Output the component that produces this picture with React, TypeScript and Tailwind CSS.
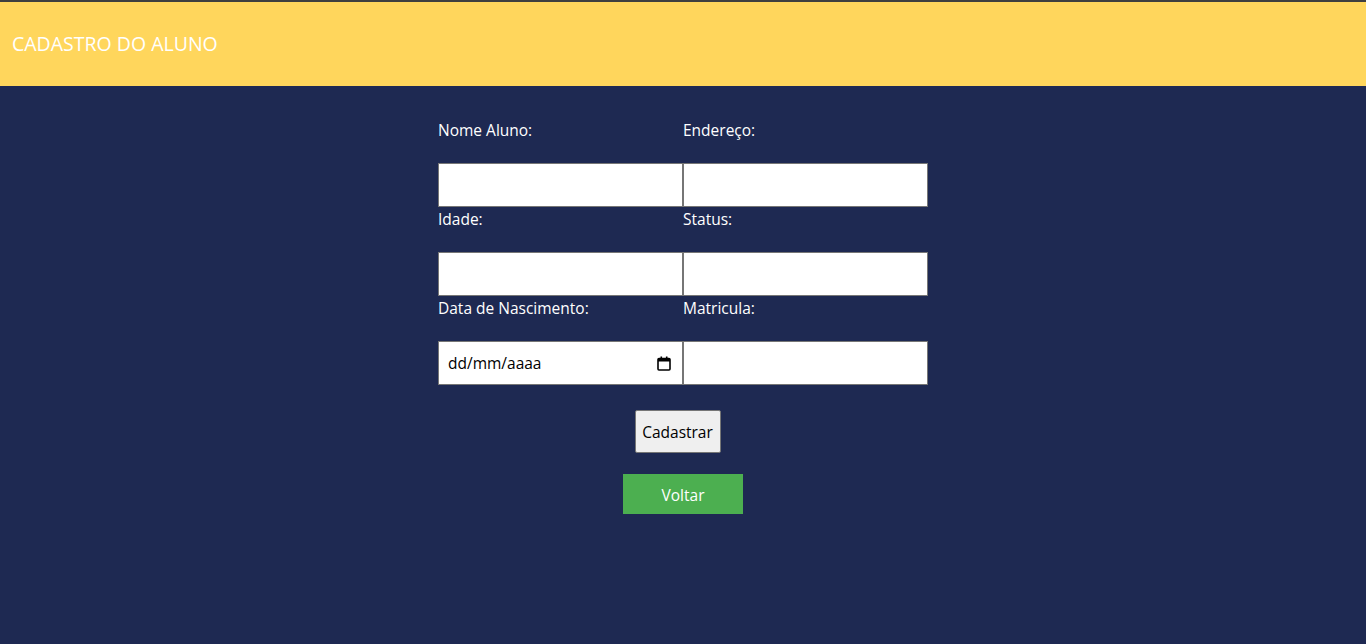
import React from "react";

const font = { fontFamily: '"Open Sans", "Noto Sans", sans-serif' };

function Label({ children }: { children: React.ReactNode }) {
  return (
    <div className="mt-[2px] mb-[23px] h-5 text-[15.5px] leading-5 text-white">{children}</div>
  );
}

function Field({ label, children }: { label: string; children?: React.ReactNode }) {
  return (
    <div className="flex flex-col">
      <Label>{label}</Label>
      {children ?? (
        <input
          type="text"
          className="h-[44px] w-full border border-[#767676] bg-white px-[10px] text-[15px] text-black outline-none"
        />
      )}
    </div>
  );
}

function DateBox() {
  return (
    <div className="flex h-[44px] w-full items-center justify-between border border-[#767676] bg-white pt-[2px] pl-[9px] pr-[11px] text-[15.5px] text-black">
      <span>dd/mm/aaaa</span>
      <svg width="14" height="15" viewBox="0 0 14 15" fill="none" className="-mt-[2px]">
        <rect x="1" y="2.5" width="12" height="11.5" rx="1" stroke="#000" strokeWidth="1.6" />
        <rect x="1" y="2.5" width="12" height="3" fill="#000" />
        <rect x="3.5" y="0.5" width="1.6" height="3" fill="#000" />
        <rect x="8.9" y="0.5" width="1.6" height="3" fill="#000" />
      </svg>
    </div>
  );
}

export default function App() {
  return (
    <div className="flex min-h-[644px] flex-col bg-[#1e2952]" style={font}>
      <div className="h-[2px] bg-[#3f3f3f]" />
      <header className="flex h-[84px] items-center bg-[#ffd65c] px-3">
        <h1 className="text-[19.5px] font-normal text-white">CADASTRO DO ALUNO</h1>
      </header>
      <main className="flex flex-col items-center pt-[32px]">
        <div className="grid w-[490px] grid-cols-2">
          <Field label="Nome Aluno:" />
          <Field label="Endereço:" />
          <Field label="Idade:" />
          <Field label="Status:" />
          <Field label="Data de Nascimento:">
            <DateBox />
          </Field>
          <Field label="Matricula:" />
        </div>
        <button className="mt-[25px] mr-[11px] h-[43px] w-[86px] rounded-[2px] border border-[#767676] bg-[#efefef] pt-[2px] text-[15.5px] text-black">
          Cadastrar
        </button>
        <button className="mt-[21px] h-[40px] w-[120px] bg-[#4caf50] pt-[3px] text-[15.5px] text-white">
          Voltar
        </button>
      </main>
    </div>
  );
}
